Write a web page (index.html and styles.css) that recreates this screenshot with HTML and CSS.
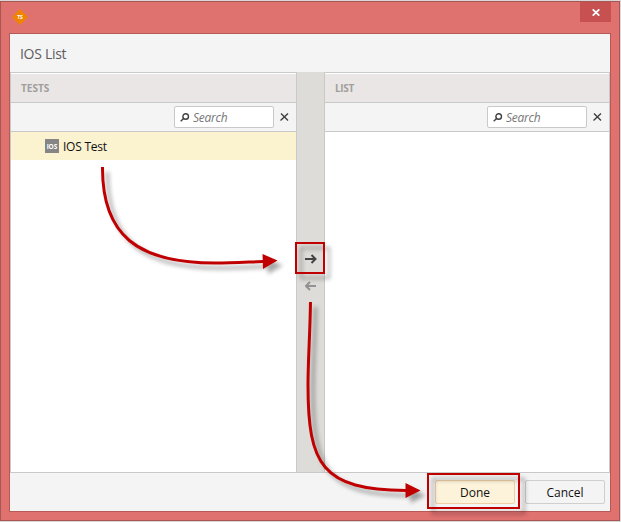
FILE: index.html
```
<!DOCTYPE html>
<html lang="en">
<head>
<meta charset="utf-8">
<title>IOS List</title>
<link rel="stylesheet" href="styles.css">
</head>
<body>
<div class="window">
  <div class="titlebar">
    <svg class="logo" width="16" height="16" viewBox="0 0 16 16"><path d="M8 0L16 8L8 16L0 8Z" fill="#f08300"/><text x="8" y="10" text-anchor="middle" class="logo-text">TS</text></svg>
    <div class="close"><svg width="8" height="7" viewBox="0 0 8 7"><path d="M.7.3L7.3 6.7M7.3.3L.7 6.7" stroke="#fff" stroke-width="1.7"/></svg></div>
  </div>
  <div class="dialog">
    <div class="heading"><span class="heading-text">IOS List</span></div>
    <div class="panels">
      <div class="panel left">
        <div class="panel-title"><span class="tests">TESTS</span></div>
        <div class="tools">
          <div class="search"><svg width="10" height="10" viewBox="0 0 10 10"><circle cx="5.7" cy="4.5" r="2.8"/><path d="M3.6 6.5L.7 9.2"/></svg><span>Search</span></div>
          <svg class="clear" width="9" height="8" viewBox="0 0 9 8"><path d="M1 .5L8 7.5M8 .5L.5 7.5"/></svg>
        </div>
        <div class="row"><svg width="14" height="14" viewBox="0 0 14 14"><path d="M0 0H14V14H0Z" fill="#858585"/><text x="7" y="9.5" text-anchor="middle" class="ios-text">iOS</text></svg><span class="row-text">IOS Test</span></div>
      </div>
      <div class="movers">
        <svg class="move" width="12" height="10" viewBox="0 0 12 10"><path d="M0 5H10M6.5 1L10.5 5L6.5 9" stroke="#444"/></svg>
        <svg class="move" width="12" height="10" viewBox="0 0 12 10"><path d="M11 5H1.5M5 1L1 5L5 9" stroke="#929292"/></svg>
      </div>
      <div class="panel right">
        <div class="panel-title"><span class="list">LIST</span></div>
        <div class="tools">
          <div class="search"><svg width="10" height="10" viewBox="0 0 10 10"><circle cx="5.7" cy="4.5" r="2.8"/><path d="M3.6 6.5L.7 9.2"/></svg><span>Search</span></div>
          <svg class="clear" width="9" height="8" viewBox="0 0 9 8"><path d="M1 .5L8 7.5M8 .5L.5 7.5"/></svg>
        </div>
      </div>
    </div>
    <div class="footer">
      <div class="button primary"><span>Done</span></div>
      <div class="button"><span>Cancel</span></div>
    </div>
  </div>
</div>
<svg class="annotations" width="621" height="522" viewBox="0 0 621 522">
  <g class="marks">
    <path d="M102.5 167C102 235 137 263 215 263C233 263 248 262 263 261.5"/>
    <path class="head" d="M262.5 254L277.5 260.5L263 269Z"/>
    <path d="M310.5 302C310 335 308 360 308 385C308 465 322 490 406 490.5"/>
    <path class="head" d="M405.5 483L420.5 490.5L405.5 498Z"/>
    <rect class="box" x="296" y="243" width="28" height="30"/>
    <rect class="box" x="428" y="474" width="91" height="34"/>
  </g>
</svg>
</body>
</html>
```
FILE: styles.css
```
* { box-sizing: border-box; }
body {
  margin: 0;
  width: 621px;
  height: 522px;
  padding: 1px 1px 1px 0;
  overflow: hidden;
  background: #d8d8d8;
  font-family: "Open Sans", "Noto Sans", sans-serif;
  font-size: 12px;
  color: #111;
}
svg { display: block; flex: none; }
span { white-space: nowrap; }
.window {
  height: 520px;
  padding: 0 8px 8px;
  border: 1px solid #a95552;
  background: #df716f;
  display: flex;
  flex-direction: column;
}
.titlebar {
  height: 31px;
  display: flex;
  justify-content: space-between;
  align-items: flex-start;
  padding-left: 3px;
}
.logo { margin-top: 7px; }
.logo-text { font-size: 5px; font-weight: 700; fill: #fff; }
.close {
  width: 31px;
  height: 20px;
  background: #c75050;
  display: flex;
  align-items: center;
  justify-content: center;
}
.dialog {
  flex: 1;
  border: 1px solid #b65a58;
  background: #f4f4f4;
  display: flex;
  flex-direction: column;
}
.heading {
  height: 38px;
  padding-left: 10px;
  line-height: 40px;
  font-size: 14px;
  color: #5c5c5c;
}
.heading-text { letter-spacing: -.3px; }
.panels {
  height: 401px;
  display: grid;
  grid-template-columns: 286px 29px 285px;
  border-bottom: 1px solid #c9c9c9;
}
.panel {
  background: #fff;
  border-top: 1px solid #c9c9c9;
}
.left { border-left: 1px solid #c9c9c9; }
.right { border-right: 1px solid #c9c9c9; }
.panel-title {
  height: 30px;
  border-top: 1px solid #fff;
  border-bottom: 1px solid #c9c9c9;
  background: #e9e6e5;
  padding-left: 10px;
  line-height: 29px;
  font-size: 10px;
  font-weight: 700;
  color: #a09e9d;
}
.list { letter-spacing: -.3px; }
.tests { letter-spacing: 0; }
.tools {
  height: 29px;
  border-bottom: 1px solid #c9c9c9;
  background: #f4f4f4;
  display: flex;
  justify-content: flex-end;
  align-items: center;
  gap: 6px;
  padding-right: 7px;
}
.search {
  width: 100px;
  height: 22px;
  border: 1px solid #c9c9c9;
  border-radius: 2px;
  background: #fff;
  display: flex;
  align-items: center;
  gap: 3px;
  padding-left: 5px;
  color: #777;
  font-style: italic;
  letter-spacing: -.25px;
}
.search svg, .clear {
  fill: none;
  stroke: #404040;
  stroke-width: 1.4;
}
.row {
  height: 28px;
  background: #fbf2cf;
  display: flex;
  align-items: center;
  gap: 4px;
  padding-left: 34px;
}
.row-text { padding-top: 1px; letter-spacing: -.25px; }
.ios-text { font-size: 6.5px; font-weight: 700; fill: #fff; }
.movers {
  background: #dddcd8;
  border: solid #c9c9c9;
  border-width: 0 1px;
  display: flex;
  flex-direction: column;
  align-items: center;
  padding-top: 182px;
  gap: 17px;
}
.move { fill: none; stroke-width: 2; }
.footer {
  flex: 1;
  display: flex;
  justify-content: flex-end;
  gap: 10px;
  padding: 7px 5px 0 0;
}
.button {
  width: 80px;
  height: 24px;
  border: 1px solid #cfcfcf;
  border-radius: 2px;
  background: #f4f4f4;
  text-align: center;
  line-height: 24px;
}
.primary {
  border-color: #f1cda5;
  background: #fcf3da;
}
.annotations {
  position: absolute;
  left: 0;
  top: 0;
}
.marks {
  fill: none;
  stroke: #c00000;
  stroke-width: 3;
  filter: drop-shadow(5px 5px 2px rgba(0, 0, 0, .35));
}
.marks .head { fill: #c00000; stroke: none; }
.marks .box { stroke-width: 2; }
```
